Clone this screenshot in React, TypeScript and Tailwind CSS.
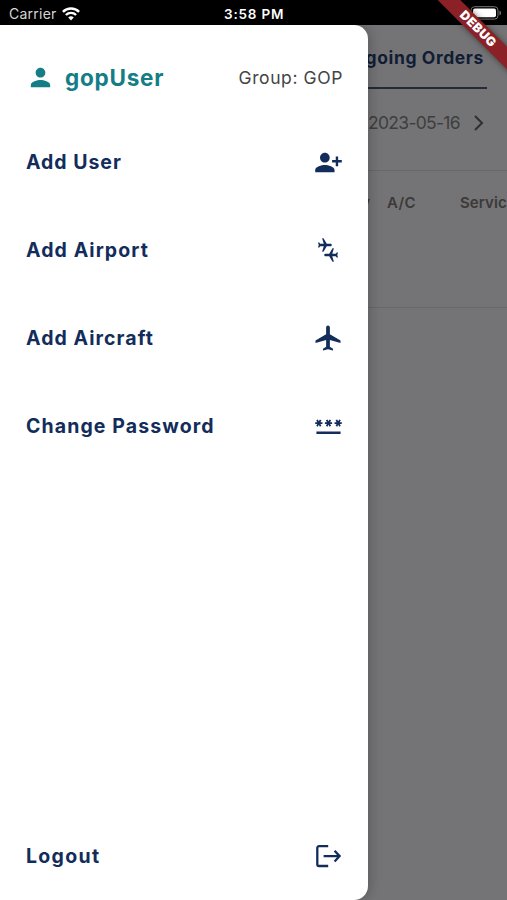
import type { ReactNode } from 'react';
import { MdPerson, MdPersonAddAlt1, MdConnectingAirports, MdPassword } from 'react-icons/md';

interface MenuEntry {
  label: string;
  spacing: string;
  icon: ReactNode;
}

function AirplaneIcon() {
  return (
    <svg className="w-[30px] h-[30px]" viewBox="0 0 24 24" fill="currentColor">
      <path d="M22 16v-2l-8.5-5V3.5c0-.83-.67-1.5-1.5-1.5s-1.5.67-1.5 1.5V9L2 14v2l8.5-2.5V19L8 20.5V22l4-1 4 1v-1.5L13.5 19v-5.5L22 16z" />
    </svg>
  );
}

function LogoutIcon() {
  return (
    <svg className="w-[30px] h-[30px]" viewBox="0 0 30 30" fill="none" stroke="currentColor" strokeWidth="2.3">
      <path d="M15.2 5.2H6a1.7 1.7 0 0 0-1.7 1.7v16.4A1.7 1.7 0 0 0 6 25h9.2" />
      <path d="M10.6 15.1h15.6M21.6 9.7l5 5.4-5 5.4" />
    </svg>
  );
}

function WifiIcon() {
  return (
    <svg className="w-[18px] h-[14px]" viewBox="0 0 18 14" fill="none" stroke="white" strokeWidth="2.4">
      <path d="M.9 4.8a11.5 11.5 0 0 1 16.2 0" />
      <path d="M3.9 8a7.3 7.3 0 0 1 10.2 0" />
      <path d="M6.2 10.6a4 4 0 0 1 5.6 0L9 13.6z" fill="white" stroke="none" />
    </svg>
  );
}

const entries: MenuEntry[] = [
  { label: 'Add User', spacing: 'tracking-[0.97px]', icon: <MdPersonAddAlt1 size={29} /> },
  { label: 'Add Airport', spacing: 'tracking-[1.08px]', icon: <MdConnectingAirports size={30} /> },
  { label: 'Add Aircraft', spacing: 'tracking-[1.06px]', icon: <AirplaneIcon /> },
  { label: 'Change Password', spacing: 'tracking-[1.1px]', icon: <MdPassword size={29} className="-mt-0.5" /> },
];

function StatusBar() {
  return (
    <header className="h-[25px] bg-black text-white flex items-center relative shrink-0">
      <div className="flex items-center gap-[5px] pl-[9px] pt-[2px]">
        <span className="text-[14px] leading-5 tracking-[0.25px] text-[#d8d8d8]">Carrier</span>
        <WifiIcon />
      </div>
      <span className="absolute left-[224px] top-[4px] text-[13.5px] leading-5 font-semibold tracking-[0.8px] whitespace-nowrap">
        3:58 PM
      </span>
      <svg className="absolute left-[470px] top-[6px] w-[32px] h-[14px]" viewBox="0 0 32 14">
        <rect x="1" y=".7" width="27" height="12.4" rx="3.5" fill="none" stroke="#777" />
        <rect x="3" y="2.5" width="23" height="8.8" rx="2" fill="white" />
        <path d="M29.5 4.5v5c2-.7 2-4.3 0-5z" fill="#777" />
      </svg>
    </header>
  );
}

function Drawer() {
  return (
    <aside className="absolute inset-y-0 left-0 w-[368px] bg-white rounded-r-[14px] flex flex-col pl-[26px] pr-[25px] text-[#132d5b] shadow-[2px_0_12px_rgba(0,0,0,0.22)]">
      <div className="h-[93px] pt-[12px] flex items-center justify-between shrink-0">
        <div className="flex items-center gap-[10px] text-[#147d86]">
          <MdPerson size={29} />
          <span className="text-[22.5px] font-bold leading-8 tracking-[0.75px]">gopUser</span>
        </div>
        <span className="text-[17.5px] leading-6 tracking-[0.6px] text-[#444]">Group: GOP</span>
      </div>
      <nav className="flex flex-col">
        {entries.map((entry) => (
          <button key={entry.label} className="h-[88px] flex items-center justify-between">
            <span className={`text-[19.5px] leading-7 font-bold ${entry.spacing}`}>{entry.label}</span>
            {entry.icon}
          </button>
        ))}
      </nav>
      <button className="mt-auto h-[88px] flex items-center justify-between">
        <span className="text-[19.5px] leading-7 font-bold tracking-[1.3px]">Logout</span>
        <LogoutIcon />
      </button>
    </aside>
  );
}

function OrdersPage() {
  return (
    <section className="absolute inset-y-0 left-[325px] right-0 overflow-hidden">
      <div className="h-[64px] mr-[20px] border-b-2 border-[#242b38] flex items-center justify-end pr-[3px] pt-[5px]">
        <span className="text-[17.5px] font-bold tracking-[0.6px] text-[#111d34] whitespace-nowrap">Outgoing Orders</span>
      </div>
      <div className="h-[82px] border-b border-[#68686a] flex items-start pt-[22px] pl-[43px]">
        <span className="w-[104px] text-[17.5px] leading-6 tracking-[-0.7px] text-[#3e3e40] whitespace-nowrap">2023-05-16</span>
        <svg className="w-3 h-4 mt-[4px]" viewBox="0 0 12 16" fill="none" stroke="#303032" strokeWidth="2">
          <path d="M3 1l7 7-7 7" />
        </svg>
      </div>
      <div className="h-[137px] border-b border-[#68686a] pt-[21px] flex text-[15px] leading-[22px] font-semibold text-[#3c3937]">
        <span className="w-[62px] pr-[17px] text-right shrink-0">y</span>
        <span className="w-[73px] tracking-[0.4px] shrink-0">A/C</span>
        <span className="tracking-[0.1px] shrink-0">Service</span>
      </div>
    </section>
  );
}

export default function App() {
  return (
    <div className="relative w-[507px] h-[900px] bg-black overflow-hidden flex flex-col font-['Inter',sans-serif]">
      <StatusBar />
      <main className="relative flex-1 bg-[#747476]">
        <OrdersPage />
        <Drawer />
      </main>

      {/* Debug ribbon */}
      <div className="absolute top-[21px] left-[413px] w-[130px] h-[16px] rotate-45 bg-[#8b2027] shadow-[0_0_6px_rgba(0,0,0,0.5)] flex items-center justify-center">
        <span className="text-[12.5px] leading-4 font-black tracking-[0.4px] text-white">DEBUG</span>
      </div>
    </div>
  );
}
